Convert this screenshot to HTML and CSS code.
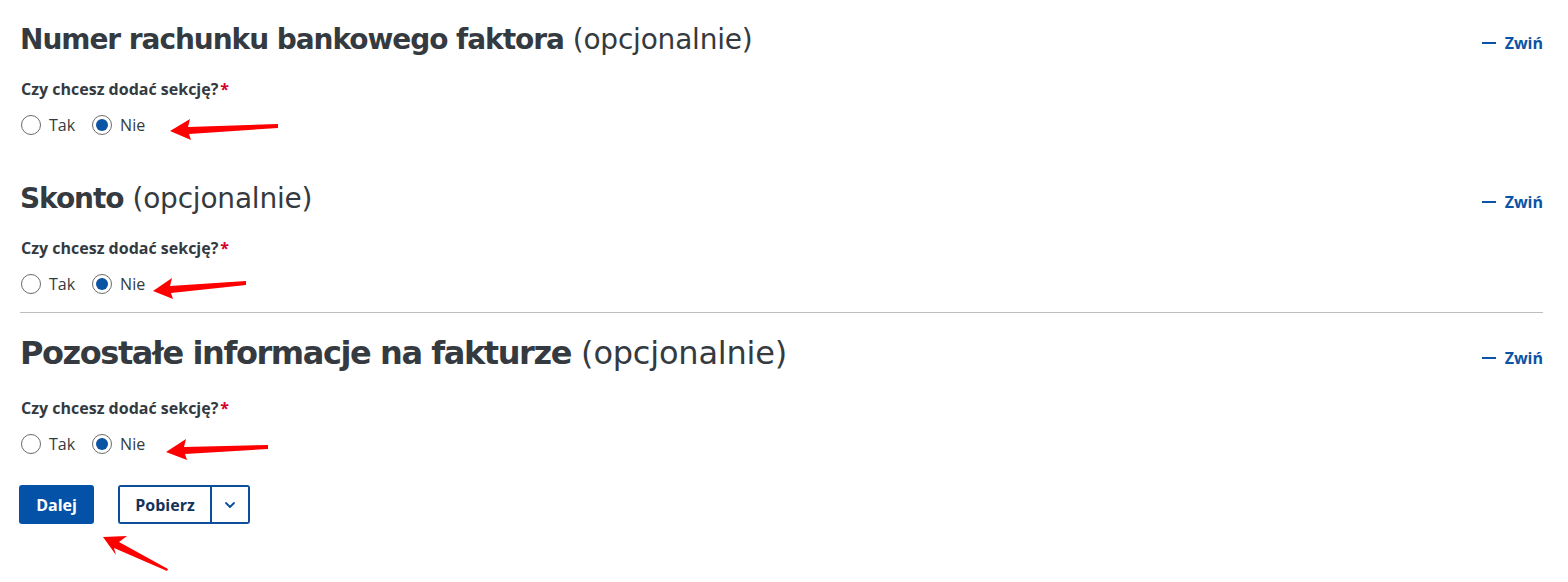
FILE: index.html
```html
<!DOCTYPE html>
<html lang="pl">
<head>
<meta charset="utf-8">
<title>Formularz</title>
<link rel="stylesheet" href="styles.css">
</head>
<body>
<main class="page">
  <section class="sec sec-1">
    <div class="sec-head">
      <h2 class="title"><strong>Numer rachunku bankowego faktora</strong> <span class="opt">(opcjonalnie)</span></h2>
      <a class="toggle" href="#"><span class="dash"></span>Zwiń</a>
    </div>
    <p class="label">Czy chcesz dodać sekcję?<span class="req">*</span></p>
    <div class="radios">
      <label class="radio"><span class="dot"></span>Tak</label>
      <label class="radio"><span class="dot on"></span>Nie</label>
    </div>
  </section>
  <section class="sec sec-2">
    <div class="sec-head">
      <h2 class="title"><strong>Skonto</strong> <span class="opt">(opcjonalnie)</span></h2>
      <a class="toggle" href="#"><span class="dash"></span>Zwiń</a>
    </div>
    <p class="label">Czy chcesz dodać sekcję?<span class="req">*</span></p>
    <div class="radios">
      <label class="radio"><span class="dot"></span>Tak</label>
      <label class="radio"><span class="dot on"></span>Nie</label>
    </div>
  </section>
  <hr class="divider">
  <section class="sec sec-3">
    <div class="sec-head">
      <h2 class="title big"><strong>Pozostałe informacje na fakturze</strong> <span class="opt">(opcjonalnie)</span></h2>
      <a class="toggle big" href="#"><span class="dash"></span>Zwiń</a>
    </div>
    <p class="label">Czy chcesz dodać sekcję?<span class="req">*</span></p>
    <div class="radios">
      <label class="radio"><span class="dot"></span>Tak</label>
      <label class="radio"><span class="dot on"></span>Nie</label>
    </div>
  </section>
  <div class="actions">
    <button class="btn-primary">Dalej</button>
    <div class="split">
      <button class="split-main">Pobierz</button>
      <button class="split-caret" aria-label="Więcej">
        <svg width="14" height="14" viewBox="0 0 14 14"><path d="M3 5 L7 9 L11 5" fill="none" stroke="#0b4f9c" stroke-width="1.8" stroke-linecap="round" stroke-linejoin="round"/></svg>
      </button>
    </div>
  </div>
</main>
<svg class="marks" width="1568" height="582" viewBox="0 0 1568 582">
  <polygon points="170,131 190,119 188,127 278,124 278,128 189,134 191,140" fill="#ff0000"/>
  <polygon points="153,291 172,278 170,286 246,281 246,285 171,293 173,299" fill="#ff0000"/>
  <polygon points="166,452 186,439 184,447 268,445 268,449 185,454 187,460" fill="#ff0000"/>
  <polygon points="103,537 127,536 119,542 168,569 167,571 114,548 116,555" fill="#ff0000"/>
</svg>
</body>
</html>
```
FILE: styles.css
```css
* { box-sizing: border-box; }
html, body { margin: 0; padding: 0; background: #fff; }
body { font-family: "Open Sans", "Noto Sans", sans-serif; color: #333; }
.page { padding: 20px 25px 0 20px; }
.sec-head { display: flex; justify-content: space-between; align-items: center; height: 40px; }
.title { margin: 0; font-family: "DejaVu Sans", sans-serif; font-weight: 400; font-size: 28px; color: #343a40; line-height: 40px; }
.title strong { font-weight: 700; letter-spacing: -1.05px; }
.title .opt { letter-spacing: -0.2px; }
.title.big { font-size: 32px; }
.title.big strong { letter-spacing: -1.42px; }
.toggle { display: flex; align-items: center; gap: 9px; font-size: 16px; font-weight: 700; color: #0b53a4; text-decoration: none; padding-top: 6px; line-height: 22px; }
.toggle.big { padding-top: 9px; }
.dash { width: 14px; height: 2px; background: #0b53a4; display: block; }
.label { margin: 18px 0 0 1px; font-size: 16px; font-weight: 700; color: #343a40; line-height: 22px; }
.sec-3 .label { margin-top: 24px; }
.req { color: #d6002a; margin-left: 2px; }
.radios { display: flex; gap: 16px; margin-top: 13px; height: 24px; align-items: center; }
.radio { display: flex; align-items: center; gap: 8px; font-size: 16px; color: #343a40; }
.dot { width: 20px; height: 20px; border: 1px solid #6b6b6b; border-radius: 50%; display: flex; align-items: center; justify-content: center; margin-left: 1px; }
.dot.on::after { content: ""; width: 12px; height: 12px; border-radius: 50%; background: #0b53a4; }
.sec-2 { margin-top: 42px; }
.divider { border: 0; border-top: 1px solid #bdbdbd; margin: 16px 0 0 0; }
.sec-3 { margin-top: 20px; }
.actions { display: flex; gap: 24px; margin-top: 29px; }
.btn-primary { background: #0352a7; color: #fff; border: 0; border-radius: 3px; font-family: inherit; font-weight: 700; font-size: 16px; width: 75px; height: 39px; margin-left: -1px; }
.split { display: flex; border: 2px solid #0b4f9c; border-radius: 3px; height: 39px; }
.split-main { background: #fff; border: 0; border-right: 2px solid #0b4f9c; font-family: inherit; font-weight: 700; font-size: 16px; color: #14325a; width: 92px; padding: 0; }
.split-caret { background: #fff; border: 0; width: 36px; display: flex; align-items: center; justify-content: center; }
.marks { position: absolute; left: 0; top: 0; pointer-events: none; }
```
